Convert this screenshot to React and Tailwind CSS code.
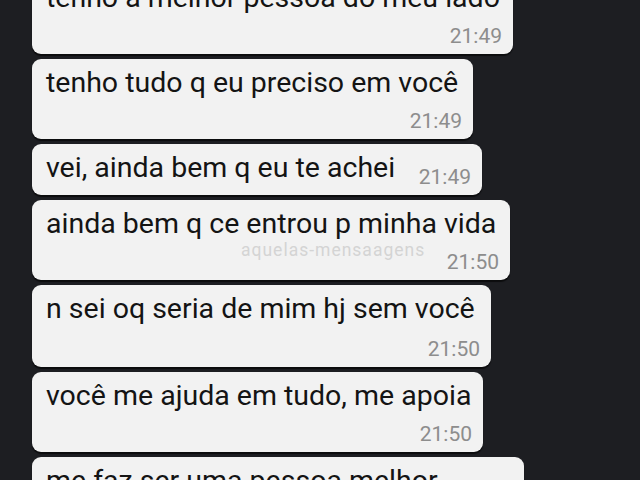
import React from "react";

const font = { fontFamily: "Roboto, 'Noto Sans', Arial, sans-serif" };

function Bubble({ text, time, w, h = "h-[80px]", children }) {
  return (
    <div
      className={`relative ${w} ${h} shrink-0 rounded-[9px] bg-[#f2f2f2] pl-[14px] pr-[11px] pt-[7px] flex flex-col shadow-[0_2px_1px_rgba(0,0,0,0.6)]`}
    >
      <div className="text-[28.5px] leading-[34px] text-[#141414] whitespace-nowrap">{text}</div>
      {children}
      <div className="mt-auto mb-[6px] self-end text-[21px] leading-[24px] text-[#8d8d8d]">{time}</div>
    </div>
  );
}

export default function App() {
  return (
    <div
      className="w-[640px] h-[480px] overflow-hidden bg-[#1d1e22] pl-[32px]"
      style={font}
    >
      <div className="flex flex-col gap-[5px] mt-[-26px]">
        <Bubble w="w-[481px]" text="tenho a melhor pessoa do meu lado" time="21:49" />
        <Bubble w="w-[441px]" text="tenho tudo q eu preciso em você" time="21:49" />
        <div className="w-[450px] h-[51px] shrink-0 rounded-[9px] bg-[#f2f2f2] pl-[14px] pr-[11px] pt-[7px] flex items-start justify-between shadow-[0_2px_1px_rgba(0,0,0,0.6)]">
          <div className="text-[28.5px] leading-[34px] text-[#141414] whitespace-nowrap">vei, ainda bem q eu te achei</div>
          <div className="mt-[14px] text-[21px] leading-[24px] text-[#8d8d8d]">21:49</div>
        </div>
        <Bubble w="w-[478px]" text="ainda bem q ce entrou p minha vida" time="21:50">
          <div className="absolute left-[209px] top-[41px] text-[17.5px] leading-[18px] tracking-[1px] text-[#d4d4d4]">
            aquelas-mensaagens
          </div>
        </Bubble>
        <Bubble w="w-[459px]" h="h-[82px]" text="n sei oq seria de mim hj sem você" time="21:50" />
        <Bubble w="w-[451px]" text="você me ajuda em tudo, me apoia" time="21:50" />
        <Bubble w="w-[492px]" text="me faz ser uma pessoa melhor" time="21:50" />
      </div>
    </div>
  );
}
